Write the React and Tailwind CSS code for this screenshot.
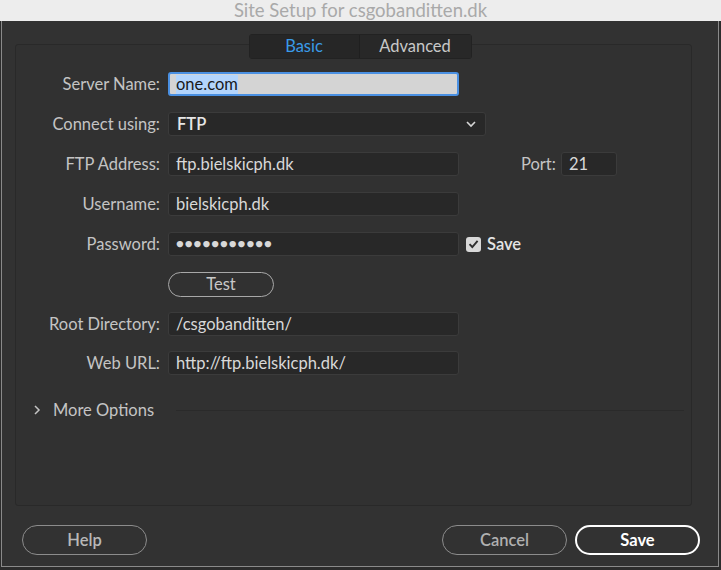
import React from "react";

const font = { fontFamily: "Lato, 'Open Sans', sans-serif" };

function Label({ children }) {
  return (
    <div className="w-[152px] pr-[8px] text-right text-[16.5px] text-[#c4c4c4] leading-none">
      {children}
    </div>
  );
}

function Field({ value, w = "w-[291px]" }) {
  return (
    <div
      className={`${w} h-[24px] rounded-[3px] border border-[#3b3b3b] bg-[#282828] flex items-center pl-[7px] text-[16.5px] text-[#d8d8d8]`}
    >
      {value}
    </div>
  );
}

function Row({ label, children, className = "" }) {
  return (
    <div className={`flex items-center h-[24px] ${className}`}>
      <Label>{label}</Label>
      {children}
    </div>
  );
}

export default function App() {
  return (
    <div
      className="w-[721px] h-[570px] bg-[#2c2c2c] overflow-hidden flex flex-col"
      style={font}
    >
      {/* title bar */}
      <div className="h-[21px] bg-[#ededed] flex justify-center items-start overflow-hidden">
        <div className="text-[18.5px] leading-[20px] text-[#a9a9a9]">
          Site Setup for csgobanditten.dk
        </div>
      </div>

      {/* window */}
      <div className="ml-[1px] w-[718px] h-[546px] bg-[#323232] border-l-[1.5px] border-r-[1.5px] border-b-[1.5px] border-[#8a8a8a] flex flex-col">
        {/* tabs */}
        <div className="flex justify-center mt-[13px] relative z-10">
          <div className="flex rounded-[3px] border border-[#222] bg-[#252525]">
            <div className="w-[110px] h-[23px] flex items-center justify-center text-[16.5px] text-[#3a9be8] bg-[#262626] border-r border-[#1f1f1f]">
              Basic
            </div>
            <div className="w-[111px] h-[23px] flex items-center justify-center text-[16.5px] text-[#c8c8c8] bg-[#282828]">
              Advanced
            </div>
          </div>
        </div>

        {/* panel */}
        <div className="ml-[13px] -mt-[15px] w-[677px] h-[462px] rounded-[3px] border border-[#292929] bg-[#313131] flex flex-col pt-[27px] gap-[16px]">
          <Row label="Server Name:">
            <div className="w-[291px] h-[24px] rounded-[3px] border-2 border-[#4a90e2] bg-[#d4d4d4] flex items-center pl-[6px] text-[16.5px] text-[#1a1a1a]">
              <span className="inline-block bg-[#b3d5fd] leading-[19px]">one.com</span>
            </div>
          </Row>
          <Row label="Connect using:">
            <div className="w-[318px] h-[24px] rounded-[3px] border border-[#3b3b3b] bg-[#282828] flex items-center justify-between pl-[8px] pr-[8px] text-[16.5px] text-[#e6e6e6] font-semibold">
              FTP
              <svg width="12" height="8" viewBox="0 0 12 8" fill="none">
                <path d="M2 2l4 4 4-4" stroke="#d6d6d6" strokeWidth="1.6" />
              </svg>
            </div>
          </Row>
          <Row label="FTP Address:">
            <Field value="ftp.bielskicph.dk" />
            <div className="ml-[62px] text-[16.5px] text-[#c4c4c4]">Port:</div>
            <div className="ml-[5px]">
              <Field value="21" w="w-[56px]" />
            </div>
          </Row>
          <Row label="Username:">
            <Field value="bielskicph.dk" />
          </Row>
          <Row label="Password:">
            <Field value={<span className="tracking-[1px] text-[13px]">●●●●●●●●●●●</span>} />
            <div className="ml-[7px] w-[15px] h-[15px] rounded-[3px] bg-[#d8d8d8] flex items-center justify-center">
              <svg width="11" height="10" viewBox="0 0 11 10" fill="none">
                <path d="M1.5 5.2l2.8 2.8L9.6 1.8" stroke="#2d2d2d" strokeWidth="1.9" />
              </svg>
            </div>
            <div className="ml-[6px] text-[16.5px] text-[#e4e4e4] font-semibold">Save</div>
          </Row>
          <div className="flex h-[24px]">
            <div className="w-[152px]" />
            <div className="w-[106px] h-[25px] rounded-full border-[1.5px] border-[#a8a8a8] flex items-center justify-center text-[16.5px] text-[#c8c8c8]">
              Test
            </div>
          </div>
          <Row label="Root Directory:">
            <Field value="/csgobanditten/" />
          </Row>
          <Row label="Web URL:" className="-mt-[1px]">
            <Field value="http://ftp.bielskicph.dk/" />
          </Row>
          <div className="flex items-center mt-[7px] h-[24px]">
            <svg className="ml-[17px]" width="8" height="12" viewBox="0 0 8 12" fill="none">
              <path d="M2 2l4 4-4 4" stroke="#c4c4c4" strokeWidth="1.5" />
            </svg>
            <div className="ml-[12px] text-[16.5px] text-[#c4c4c4]">More Options</div>
            <div className="ml-[22px] w-[508px] h-[1px] bg-[#2a2a2a]" />
          </div>
        </div>

        {/* buttons */}
        <div className="flex items-center mt-[19px] pl-[20px] pr-[18px]">
          <div className="w-[125px] h-[30px] rounded-full border-[1.5px] border-[#8c8c8c] flex items-center justify-center text-[16.5px] text-[#b8b8b8] font-semibold">
            Help
          </div>
          <div className="flex-1" />
          <div className="w-[125px] h-[30px] rounded-full border-[1.5px] border-[#8c8c8c] flex items-center justify-center text-[16.5px] text-[#b0b0b0] font-semibold">
            Cancel
          </div>
          <div className="ml-[8px] w-[125px] h-[30px] rounded-full border-[2.5px] border-white flex items-center justify-center text-[16.5px] text-white font-bold">
            Save
          </div>
        </div>
      </div>
    </div>
  );
}
